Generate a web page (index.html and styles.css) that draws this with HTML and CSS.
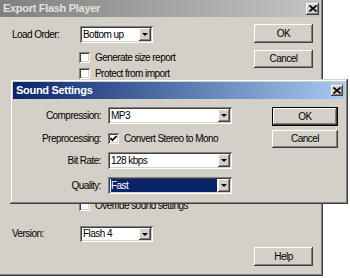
FILE: index.html
```html
<!DOCTYPE html>
<html>
<head>
<meta charset="utf-8">
<title>Export Flash Player</title>
<link rel="stylesheet" href="styles.css">
</head>
<body>
<div class="stage">
  <div class="win win-back">
    <div class="titlebar inactive">
      <span class="title">Export Flash Player</span>
      <span class="close"><svg width="8" height="7" viewBox="0 0 8 7"><path d="M0.5 0.5 L7.5 6.5 M7.5 0.5 L0.5 6.5" stroke="#000" stroke-width="1.6" fill="none"/></svg></span>
    </div>
    <div class="back-body">
      <div class="back-form">
        <div class="frow row-load">
          <span class="blabel">Load Order:</span>
          <div class="combo w73"><span class="combo-val">Bottom up</span><span class="combo-btn"><span class="arrow"></span></span></div>
        </div>
        <div class="check row-gen"><span class="box"></span><span>Generate size report</span></div>
        <div class="check row-prot"><span class="box"></span><span>Protect from import</span></div>
        <div class="check row-over"><span class="box"></span><span>Override sound settings</span></div>
        <div class="frow row-ver">
          <span class="blabel">Version:</span>
          <div class="combo w73 h16"><span class="combo-val">Flash 4</span><span class="combo-btn"><span class="arrow"></span></span></div>
        </div>
      </div>
      <div class="back-buttons">
        <button class="btn b-ok">OK</button>
        <button class="btn b-cancel">Cancel</button>
        <button class="btn b-help">Help</button>
      </div>
    </div>
  </div>

  <div class="win win-sound">
    <div class="titlebar active">
      <span class="title">Sound Settings</span>
      <span class="close"><svg width="8" height="7" viewBox="0 0 8 7"><path d="M0.5 0.5 L7.5 6.5 M7.5 0.5 L0.5 6.5" stroke="#000" stroke-width="1.6" fill="none"/></svg></span>
    </div>
    <div class="sound-body">
      <div class="sound-form">
        <div class="srow s1">
          <span class="slabel">Compression:</span>
          <div class="combo w124"><span class="combo-val">MP3</span><span class="combo-btn"><span class="arrow"></span></span></div>
        </div>
        <div class="srow s2">
          <span class="slabel">Preprocessing:</span>
          <div class="check"><span class="box"><svg width="7" height="7" viewBox="0 0 7 7"><path d="M0.5 3 L2.5 5.3 L6.5 1" stroke="#000" stroke-width="1.7" fill="none"/></svg></span><span>Convert Stereo to Mono</span></div>
        </div>
        <div class="srow s3">
          <span class="slabel">Bit Rate:</span>
          <div class="combo w124"><span class="combo-val">128 kbps</span><span class="combo-btn"><span class="arrow"></span></span></div>
        </div>
        <div class="srow s4">
          <span class="slabel">Quality:</span>
          <div class="combo w124"><span class="combo-val"><span class="sel">Fast</span></span><span class="combo-btn"><span class="arrow"></span></span></div>
        </div>
      </div>
      <div class="sound-buttons">
        <button class="btn default s-ok">OK</button>
        <button class="btn s-cancel">Cancel</button>
      </div>
    </div>
  </div>
</div>
</body>
</html>
```

FILE: styles.css
```css
* { box-sizing: border-box; margin: 0; padding: 0; }
html, body { background: #fff; }
body {
  width: 350px;
  height: 278px;
  overflow: hidden;
  font: 10px/12px "Liberation Sans", Arial, sans-serif;
  letter-spacing: -0.55px;
  color: #000;
}
.stage { position: relative; width: 350px; height: 278px; }

.win {
  background: #d4d0c8;
  display: flex;
  flex-direction: column;
}
.win-back {
  width: 323px;
  height: 276px;
  box-shadow: inset -1px -1px #404040, inset -2px -2px #808080;
}
.win-sound {
  position: absolute;
  left: 10px;
  top: 79px;
  width: 338px;
  height: 125px;
  padding: 3px;
  box-shadow: inset -1px -1px #404040, inset 1px 1px #d4d0c8, inset -2px -2px #808080, inset 2px 2px #fff;
}

.titlebar {
  display: flex;
  align-items: center;
  justify-content: space-between;
  height: 17px;
  flex: 0 0 17px;
  padding-left: 3px;
  padding-right: 2px;
  font: bold 11px/17px "Liberation Sans", Arial, sans-serif;
  letter-spacing: -0.3px;
}
.titlebar.inactive {
  background: linear-gradient(to right, #808080, #c4c4c4);
  color: #e4e2dd;
  margin-right: 3px;
  padding-right: 1px;
}
.titlebar.active {
  background: linear-gradient(to right, #0a246a, #a6caf0);
  color: #fff;
}
.close {
  width: 13px;
  height: 12px;
  background: #d4d0c8;
  box-shadow: inset -1px -1px #404040, inset 1px 1px #fff, inset -2px -2px #808080;
  display: flex;
  align-items: center;
  justify-content: center;
}
.titlebar.active .close { width: 12px; height: 11px; }

/* back dialog body */
.back-body {
  flex: 1;
  display: flex;
}
.back-form {
  flex: 0 0 242px;
  margin-left: 12px;
  display: flex;
  flex-direction: column;
}
.frow { display: flex; align-items: center; }
.blabel { width: 68px; }
.row-load { margin-top: 9px; }
.row-gen { margin-top: 9px; margin-left: 67px; }
.row-prot { margin-top: 5px; margin-left: 67px; }
.row-over { margin-top: 121px; margin-left: 67px; }
.row-ver { margin-top: 15px; }

.back-buttons {
  flex: 0 0 59px;
  display: flex;
  flex-direction: column;
  padding-bottom: 10px;
}
.btn {
  appearance: none;
  border: 0;
  background: #d4d0c8;
  color: #000;
  font: inherit;
  letter-spacing: inherit;
  display: flex;
  align-items: center;
  justify-content: center;
  box-shadow: inset -1px -1px #404040, inset 1px 1px #fff, inset -2px -2px #808080, inset 2px 2px #d4d0c8;
}
.btn.default {
  box-shadow: inset 0 0 0 1px #000, inset -2px -2px #404040, inset 2px 2px #fff, inset -3px -3px #808080;
}
.b-ok { height: 19px; margin-top: 7px; }
.b-cancel { height: 18px; margin-top: 7px; }
.b-help { height: 19px; margin-top: auto; }

/* combo box */
.combo {
  display: flex;
  height: 17px;
  padding: 2px;
  background: #fff;
  box-shadow: inset 1px 1px #808080, inset -1px -1px #fff, inset 2px 2px #404040, inset -2px -2px #d4d0c8;
}
.combo.h16 { height: 16px; }
.w73 { width: 73px; }
.w124 { width: 124px; }
.combo-val {
  flex: 1;
  display: flex;
  align-items: center;
  padding-left: 1px;
  white-space: nowrap;
  overflow: hidden;
}
.sel {
  flex: 1;
  align-self: stretch;
  display: flex;
  align-items: center;
  background: #0a246a;
  color: #fff;
  margin-right: 1px;
}
.combo-btn {
  width: 12px;
  background: #d4d0c8;
  box-shadow: inset -1px -1px #404040, inset 1px 1px #fff, inset -2px -2px #808080;
  display: flex;
  align-items: center;
  justify-content: center;
}
.arrow {
  width: 0;
  height: 0;
  border-left: 3px solid transparent;
  border-right: 3px solid transparent;
  border-top: 3px solid #000;
}

/* checkbox */
.check {
  display: flex;
  align-items: center;
  height: 11px;
  white-space: nowrap;
}
.box {
  width: 11px;
  height: 11px;
  flex: 0 0 11px;
  margin-right: 5px;
  background: #fff;
  box-shadow: inset 1px 1px #808080, inset -1px -1px #fff, inset 2px 2px #404040, inset -2px -2px #d4d0c8;
  display: flex;
  align-items: center;
  justify-content: center;
}

/* sound dialog body */
.sound-body {
  flex: 1;
  display: flex;
  padding-top: 8px;
}
.sound-form {
  flex: 0 0 219px;
  display: flex;
  flex-direction: column;
}
.srow { display: flex; align-items: center; height: 17px; }
.s2 { margin-top: 6px; }
.s3 { margin-top: 5px; }
.s4 { margin-top: 8px; }
.slabel {
  flex: 0 0 88px;
  text-align: right;
  margin-right: 7px;
}
.sound-buttons {
  flex: 0 0 66px;
  margin-left: 40px;
  display: flex;
  flex-direction: column;
}
.s-ok { height: 19px; }
.s-cancel { height: 18px; margin-top: 4px; }
```
